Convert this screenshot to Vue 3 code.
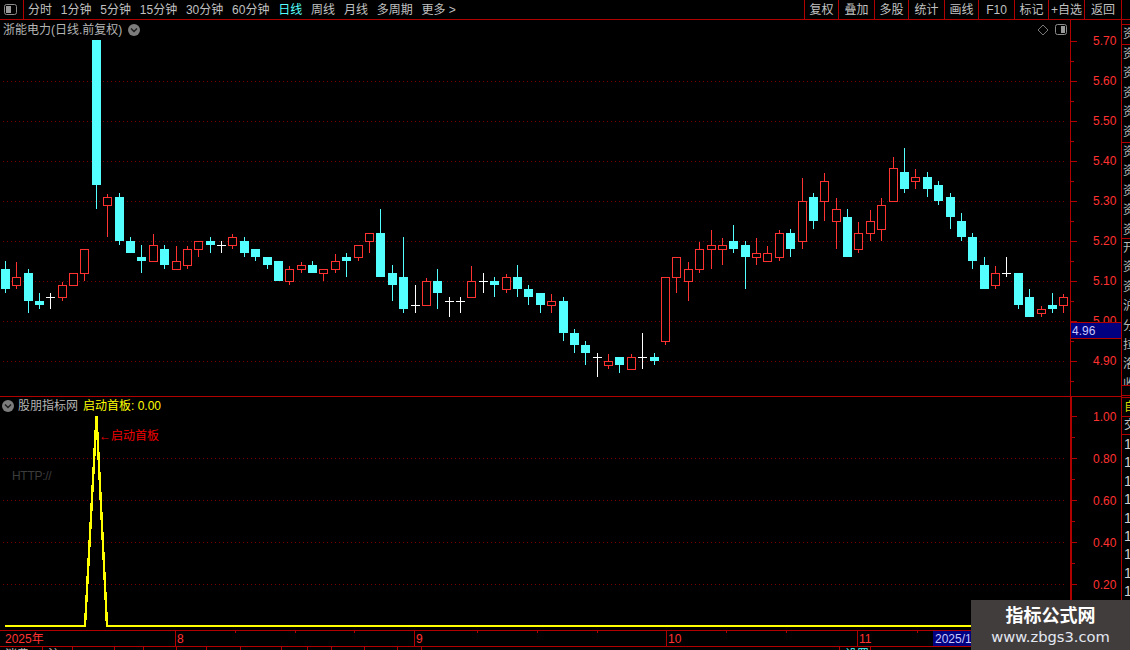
<script setup>
import { computed } from 'vue'

const leftTabs = ['分时', '1分钟', '5分钟', '15分钟', '30分钟', '60分钟', '日线', '周线', '月线', '多周期', '更多 >']
const rightTabs = [
  { t: '复权', w: 34 }, { t: '叠加', w: 36 }, { t: '多股', w: 34 }, { t: '统计', w: 36 }, { t: '画线', w: 34 },
  { t: 'F10', w: 36 }, { t: '标记', w: 34 }, { t: '+自选', w: 36 }, { t: '返回', w: 37 }
]

// wick x of every bar
const wickX = [
  5,16,28,39,50,62,73,84,96,107,119,130,141,153,164,176,187,198,210,221,232,244,255,267,278,289,301,312,323,
  335,346,358,369,380,392,403,415,426,437,449,460,471,483,494,506,517,528,540,551,563,574,585,597,608,619,631,642,654,665,676,688,699,
  711,722,733,745,756,767,779,790,802,813,824,836,847,858,870,881,893,904,915,927,938,950,961,972,984,995,1006,1018,1029,1041,1052,1063
]

// [kind, high, top, bottom, low]  u=up(red) d=down(cyan) e=doji(white, top = cross line)
const bars = [
  ['d',261,269,289,293],['u',262,277,286,289],['d',269,273,301,313],['d',293,301,305,309],['e',293,297,297,309],
  ['u',282,285,298,301],['u',273,273,286,286],['u',249,249,274,281],['d',40,40,185,209],['u',194,197,206,237],
  ['d',193,197,241,245],['d',237,241,253,253],['d',245,257,261,273],['u',234,245,262,262],['d',245,249,265,269],
  ['u',246,261,270,270],['u',246,249,266,269],['u',241,241,250,257],['d',237,241,245,253],['e',241,245,245,253],
  ['u',234,237,246,249],['d',237,241,253,257],['d',249,249,257,261],['d',257,257,265,269],['d',261,261,281,281],
  ['u',266,269,282,285],['u',262,265,270,273],['d',261,265,273,273],['u',269,269,274,281],['u',254,261,270,273],
  ['d',253,257,261,277],['u',245,245,258,261],['u',233,233,242,253],['d',209,233,277,277],['d',265,273,285,301],
  ['d',237,277,309,313],['e',285,305,305,313],['u',278,281,306,306],['d',269,281,293,309],['e',297,301,301,317],
  ['e',297,301,301,313],['u',266,281,298,298],['e',273,281,281,293],['d',277,281,285,297],['u',274,277,290,293],
  ['d',265,277,289,297],['d',285,289,297,305],['d',293,293,305,313],['u',294,301,306,313],['d',297,301,333,341],
  ['d',329,333,345,353],['d',341,345,353,365],['e',353,357,357,377],['u',354,361,366,369],['d',357,357,365,373],
  ['u',354,357,370,370],['e',333,357,357,369],['d',353,357,361,365],['u',277,277,342,345],['u',257,257,278,293],
  ['u',262,269,282,301],['u',242,249,270,273],['u',230,245,250,269],['u',238,245,250,265],['d',225,241,249,253],
  ['d',241,245,257,289],['u',238,253,258,265],['u',246,253,262,262],['u',230,233,258,261],['d',229,233,249,257],
  ['u',178,201,242,249],['d',193,197,221,229],['u',173,181,202,221],['u',198,209,222,249],['d',209,217,257,257],
  ['u',222,233,250,253],['u',210,221,234,241],['u',198,205,230,241],['u',157,168,202,202],['d',148,172,189,193],
  ['u',169,177,182,189],['d',172,177,189,197],['d',181,185,201,205],['d',193,197,217,229],['d',213,221,237,241],
  ['d',233,237,261,269],['d',257,265,289,289],['u',266,273,286,289],['e',257,273,273,277],['d',273,273,305,309],
  ['d',289,297,317,317],['u',306,309,314,317],['d',293,305,309,313],['u',294,297,306,313]
]

const candles = computed(() => bars.map((b, i) => {
  const [kind, high, top, bottom, low] = b
  return { kind, high, top, bottom, low, x: wickX[i] - 4 }
}))

const priceAxis = ['5.70', '5.60', '5.50', '5.40', '5.30', '5.20', '5.10', '5.00', '4.90'].map((t, i) => ({ t, y: 41 + i * 40 }))
const priceMinor = [61, 101, 141, 181, 221, 261, 301, 341, 381]
const priceGrid = [81, 121, 161, 201, 241, 281, 321, 361]

const subAxis = ['1.00', '0.80', '0.60', '0.40', '0.20'].map((t, i) => ({ t, y: 416 + i * 42 }))
const subMinor = [437, 479, 521, 563, 605]
const subGrid = [458, 500, 542, 584]

const months = [{ t: '8', x: 175 }, { t: '9', x: 414 }, { t: '10', x: 666 }, { t: '11', x: 857 }]
const timeTicks = [235, 295, 354, 477, 537, 597, 726, 786, 917]

const upperStrip = [
  { h: 20, chars: ['资'] },
  { h: 98, chars: ['资', '资', '资', '资', '资'] },
  { h: 96, chars: ['资', '资', '资', '资', '资'] },
  { h: 147, chars: ['开', '资', '资', '沪', '分', '拉', '洛', '收'] },
  { h: 11, chars: [] }
]
const digitRows = Array.from({ length: 9 }, () => '1')
const statusCells = [
  { t: '消费', w: 43 }, { t: '沪', w: 30 }, { t: '', w: 42 }, { t: '', w: 29 }, { t: '', w: 33 }, { t: '', w: 30 },
  { t: '', w: 34 }, { t: '', w: 41 }, { t: '', w: 26 }, { t: '', w: 24 }, { t: '', w: 33 }, { t: '', w: 33 },
  { t: '', w: 24 }, { t: '', w: 418 }, { t: '设置', w: 31, cyan: true }
]
</script>

<template>
  <div class="screen">
    <div class="toolbar">
      <div class="tool-left">
        <div class="layout-btn">
          <svg width="13" height="11" viewBox="0 0 13 11">
            <rect x="0.5" y="0.5" width="12" height="10" rx="2" fill="none" stroke="#8c8c8c" />
            <rect x="2" y="2" width="5" height="7" fill="#9a9a9a" />
          </svg>
        </div>
        <span v-for="(t, i) in leftTabs" :key="t" class="tab" :class="{ active: i === 6 }">{{ t }}</span>
      </div>
      <div class="tool-right">
        <span v-for="b in rightTabs" :key="b.t" class="tool-btn" :style="{ width: b.w + 'px' }">{{ b.t }}</span>
      </div>
    </div>

    <div class="body">
      <div class="charts">
        <div class="panel price-panel">
          <div class="chart-title">
            <span>浙能电力(日线.前复权)</span>
            <svg class="round-icon" width="12" height="12" viewBox="0 0 12 12">
              <circle cx="6" cy="6" r="6" fill="#7c7c7c" />
              <path d="M3 4.5 L6 7.5 L9 4.5" fill="none" stroke="#1c1c1c" stroke-width="1.4" />
            </svg>
          </div>
          <svg class="corner-icons" width="30" height="12" viewBox="0 0 30 12">
            <path d="M6 1 L11 6 L6 11 L1 6 Z" fill="none" stroke="#777" />
            <rect x="18.5" y="0.5" width="11" height="10" rx="2" fill="none" stroke="#8c8c8c" />
            <rect x="24" y="2" width="4" height="7" fill="#9a9a9a" />
          </svg>
          <svg class="plot" width="1121" height="376" viewBox="0 20 1121 376" shape-rendering="crispEdges">
            <line v-for="y in priceGrid" :key="y" x1="3" x2="1067" :y1="y + 0.5" :y2="y + 0.5" class="grid" />
            <g v-for="(c, i) in candles" :key="i">
              <template v-if="c.kind === 'e'">
                <rect :x="c.x + 4" :y="c.high" width="1" :height="c.low - c.high" fill="#fff" />
                <rect :x="c.x" :y="c.top" width="9" height="1" fill="#fff" />
              </template>
              <template v-else-if="c.kind === 'd'">
                <rect :x="c.x + 4" :y="c.high" width="1" :height="c.low - c.high" fill="#54ffff" />
                <rect :x="c.x" :y="c.top" width="9" :height="c.bottom - c.top" fill="#54ffff" />
              </template>
              <template v-else>
                <rect :x="c.x + 4" :y="c.high" width="1" :height="c.low - c.high" fill="#ff3232" />
                <rect :x="c.x + 0.5" :y="c.top + 0.5" width="8" :height="c.bottom - c.top - 1" fill="#000" stroke="#ff3232" />
              </template>
            </g>
            <rect x="1070" y="20" width="1" height="376" fill="#b00000" />
            <rect v-for="a in priceAxis" :key="a.t" x="1071" :y="a.y" width="6" height="1" fill="#b00000" />
            <rect v-for="y in priceMinor" :key="y" x="1071" :y="y" width="3" height="1" fill="#b00000" />
            <text v-for="a in priceAxis" :key="'l' + a.t" x="1093" :y="a.y + 4" class="axis-text">{{ a.t }}</text>
            <rect x="1070.5" y="322.5" width="51" height="16" fill="#000080" stroke="#b00000" />
            <text x="1072" y="335" class="tag-text">4.96</text>
          </svg>
        </div>

        <div class="panel sub-panel">
          <div class="sub-title">
            <svg width="12" height="12" viewBox="0 0 12 12">
              <circle cx="6" cy="6" r="6" fill="#7c7c7c" />
              <path d="M3 4.5 L6 7.5 L9 4.5" fill="none" stroke="#1c1c1c" stroke-width="1.4" />
            </svg>
            <span class="sub-name">股朋指标网</span>
            <span class="sub-value">启动首板: 0.00</span>
          </div>
          <svg class="plot" width="1121" height="233" viewBox="0 397 1121 233">
            <g shape-rendering="crispEdges">
              <line v-for="y in subGrid" :key="y" x1="3" x2="1067" :y1="y + 0.5" :y2="y + 0.5" class="grid" />
              <polyline points="5,626 85,626 96.5,416 107,626 1070,626" fill="none" stroke="#ffff00" stroke-width="2.4" />
              <rect x="1070" y="397" width="2" height="233" fill="#b00000" />
              <rect v-for="a in subAxis" :key="a.t" x="1072" :y="a.y" width="5" height="1" fill="#b00000" />
              <rect v-for="y in subMinor" :key="y" x="1072" :y="y" width="3" height="1" fill="#b00000" />
            </g>
            <text x="99" y="440" class="signal">←启动首板</text>
            <text x="12" y="480" class="http">HTTP://</text>
            <text v-for="a in subAxis" :key="a.t" x="1093" :y="a.y + 5" class="axis-text">{{ a.t }}</text>
          </svg>
        </div>

        <svg class="time-axis" width="1121" height="17" viewBox="0 630 1121 17" shape-rendering="crispEdges">
          <rect x="0" y="630" width="1121" height="1" fill="#b00000" />
          <rect x="0" y="646" width="1121" height="1" fill="#b00000" />
          <rect v-for="x in timeTicks" :key="x" :x="x" y="631" width="1" height="2" fill="#b00000" />
          <g v-for="m in months" :key="m.t">
            <rect :x="m.x" y="631" width="1" height="15" fill="#b00000" />
            <text :x="m.x + 2" y="643" class="axis-text">{{ m.t }}</text>
          </g>
          <text x="5" y="643" class="axis-text">2025年</text>
          <rect x="933" y="631" width="40" height="15" fill="#000080" />
          <text x="935" y="643" class="tag-text">2025/1</text>
        </svg>
      </div>

      <div class="strip">
        <div class="strip-upper">
          <div v-for="(s, i) in upperStrip" :key="i" class="strip-group" :style="{ height: s.h + 'px' }">
            <div v-for="(c, j) in s.chars" :key="j" class="strip-row">{{ c }}</div>
          </div>
        </div>
        <div class="strip-lower">
          <div class="strip-self">自</div>
          <div class="strip-trade">交</div>
          <div v-for="(d, i) in digitRows" :key="i" class="strip-digit">{{ d }}</div>
        </div>
      </div>
    </div>

    <div class="status">
      <span v-for="(c, i) in statusCells" :key="i" class="status-cell" :class="{ cyan: c.cyan }" :style="{ width: c.w + 'px' }">{{ c.t }}</span>
    </div>

    <div class="watermark">
      <div class="wm-title">指标公式网</div>
      <div class="wm-url">www.zbgs3.com</div>
    </div>
  </div>
</template>

<style>
html, body {
  margin: 0;
  background: #000;
}
</style>

<style scoped>
.screen {
  position: relative;
  width: 1130px;
  height: 650px;
  overflow: hidden;
  background: #000;
  display: flex;
  flex-direction: column;
  font-family: "Liberation Sans", "Noto Sans CJK SC", sans-serif;
  font-size: 12px;
  color: #c0c0c0;
}

.toolbar {
  display: flex;
  justify-content: space-between;
  flex: none;
  height: 19px;
  line-height: 20px;
  border-bottom: 1px solid #b00000;
}

.tool-left {
  display: flex;
  gap: 8.8px;
}

.layout-btn {
  width: 19px;
  margin-right: -4.8px;
  border-right: 1px solid #b00000;
  display: flex;
  align-items: center;
  padding-left: 4px;
}

.tab {
  white-space: nowrap;
}

.tab.active {
  color: #54ffff;
}

.tool-right {
  display: flex;
  margin-right: 8px;
  border-left: 1px solid #b00000;
}

.tool-btn {
  box-sizing: border-box;
  border-right: 1px solid #b00000;
  text-align: center;
  white-space: nowrap;
}

.body {
  flex: none;
  display: flex;
  height: 627px;
}

.charts {
  flex: none;
  width: 1121px;
  display: flex;
  flex-direction: column;
}

.panel {
  position: relative;
  flex: none;
}

.price-panel {
  height: 376px;
  border-bottom: 1px solid #b00000;
}

.plot,
.time-axis {
  display: block;
}

.chart-title {
  position: absolute;
  left: 3px;
  top: 2px;
  display: flex;
  align-items: center;
  gap: 6px;
  line-height: 16px;
  font-size: 12px;
  color: #b4b4b4;
}

.corner-icons {
  position: absolute;
  left: 1037px;
  top: 4px;
}

.sub-panel {
  height: 233px;
  border-top: 1px solid #b00000;
  margin-top: -1px;
}

.sub-title {
  position: absolute;
  left: 2px;
  top: 1px;
  display: flex;
  align-items: center;
  line-height: 16px;
}

.sub-name {
  margin-left: 4px;
  color: #b4b4b4;
}

.sub-value {
  margin-left: 5px;
  color: #ffff00;
}

.grid {
  stroke: #7a0000;
  stroke-width: 1;
  stroke-dasharray: 1 3;
}

.axis-text {
  font-size: 12px;
  fill: #ff3232;
}

.tag-text {
  font-size: 12px;
  fill: #c8c8ff;
}

.signal {
  font-size: 12px;
  fill: #f00000;
}

.http {
  font-size: 12px;
  letter-spacing: -0.3px;
  fill: #3c3c3c;
}

.strip {
  flex: none;
  width: 9px;
  border-left: 1px solid #b00000;
  margin-top: -1px;
  display: flex;
  flex-direction: column;
  overflow: hidden;
}

.strip-upper {
  flex: none;
  height: 377px;
  padding-top: 5px;
  box-sizing: border-box;
  border-bottom: 1px solid #b00000;
}

.strip-group {
  border-top: 1px solid #b00000;
  box-sizing: border-box;
  overflow: hidden;
}

.strip-row {
  height: 19.4px;
  line-height: 19px;
  padding-left: 1px;
  white-space: nowrap;
  color: #b8b8b8;
}

.strip-lower {
  flex: 1;
  border-left: 1px solid #b00000;
  margin-left: -1px;
}

.strip-self {
  height: 18px;
  line-height: 18px;
  padding-left: 2px;
  margin-top: 1px;
  color: #d8d800;
  border-top: 1px solid #b00000;
  white-space: nowrap;
}

.strip-trade {
  height: 17px;
  line-height: 17px;
  padding-left: 2px;
  border-top: 1px solid #b00000;
  border-bottom: 1px solid #b00000;
  white-space: nowrap;
}

.strip-digit {
  height: 18.4px;
  line-height: 18px;
  padding-left: 2px;
  font-size: 14px;
  color: #d0d0d0;
}

.status {
  flex: 1;
  display: flex;
  overflow: hidden;
}

.status-cell {
  flex: none;
  box-sizing: border-box;
  height: 16px;
  line-height: 16px;
  padding-left: 5px;
  border-right: 1px solid #b00000;
  white-space: nowrap;
  overflow: hidden;
}

.status-cell.cyan {
  color: #54ffff;
}

.watermark {
  position: absolute;
  right: 0;
  bottom: 0;
  width: 159px;
  height: 50px;
  background: #423d3d;
  text-align: center;
}

.wm-title {
  margin-top: 5px;
  font-size: 18px;
  line-height: 22px;
  font-weight: 700;
  color: #fff;
}

.wm-url {
  font-family: "DejaVu Sans", sans-serif;
  font-size: 14.7px;
  line-height: 19px;
  color: #e2e8f2;
}
</style>
